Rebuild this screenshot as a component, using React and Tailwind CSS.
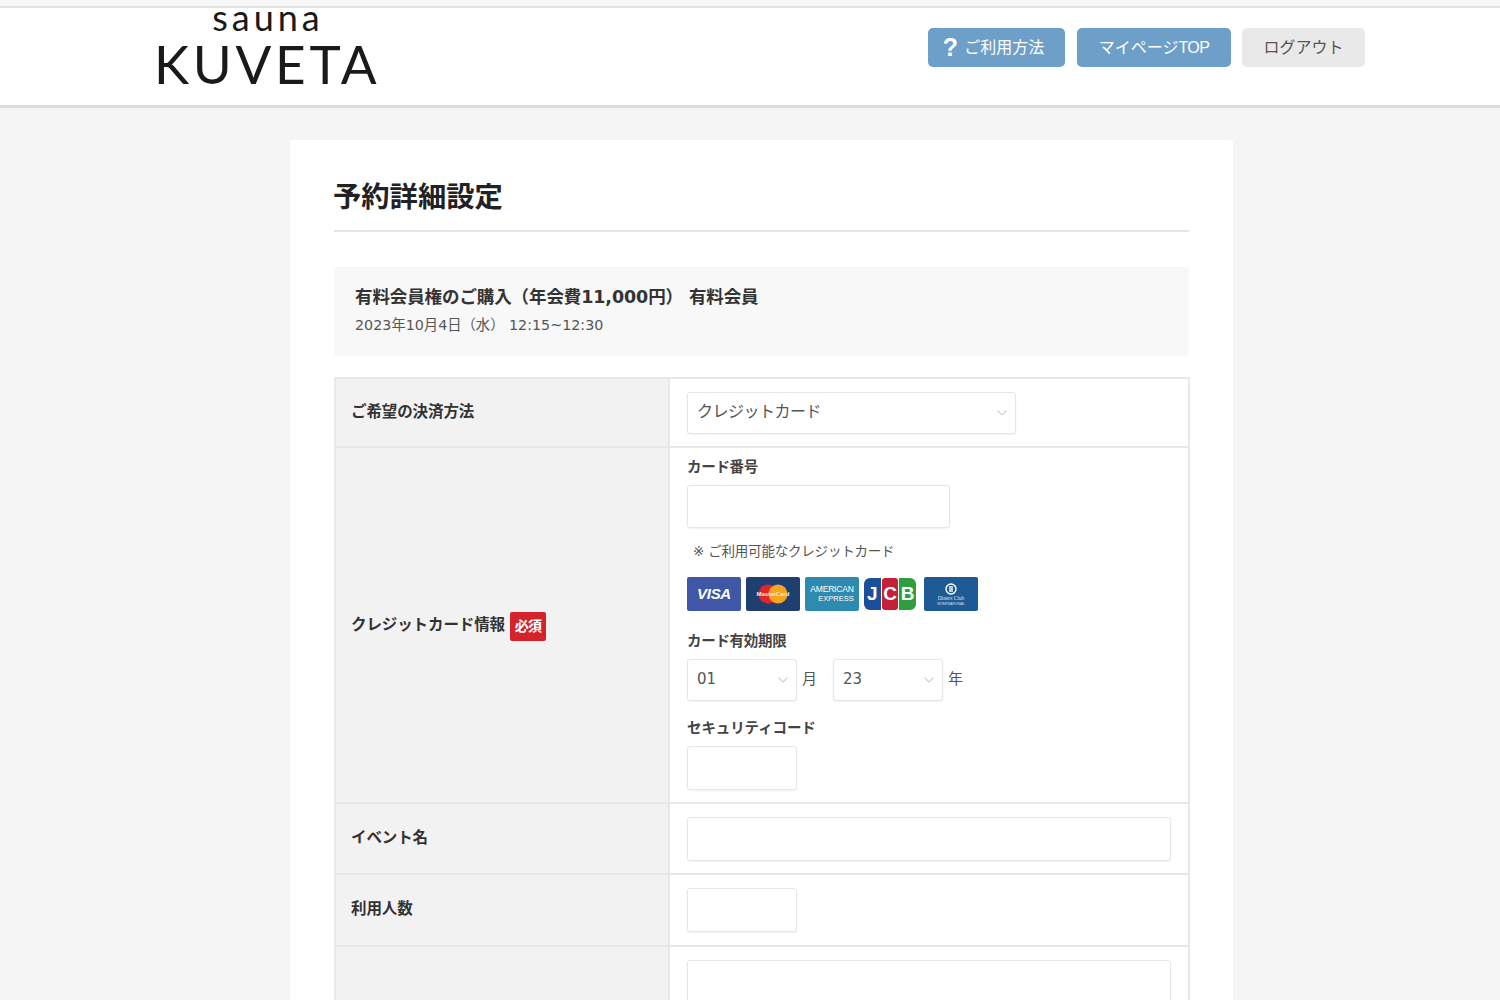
import React from 'react';

const FONT = "font-['DejaVu_Sans','Noto_Sans_CJK_JP',sans-serif]";

const Chevron = () => (
    <svg width="12" height="8" viewBox="0 0 12 8" fill="none" stroke="#d0d3d6" strokeWidth="1.2">
        <path d="M1.5 1.5 6 6l4.5-4.5" />
    </svg>
);

const Field = ({ className = '', children }) => (
    <div className={`bg-white border border-[#e6e6e6] rounded-[3px] shadow-[0_1px_2px_rgba(0,0,0,0.06)] ${className}`}>
        {children}
    </div>
);

const Select = ({ value, className = '', textClass = 'text-[16px] tracking-[-0.5px]' }) => (
    <Field className={`flex items-center justify-between pl-[9px] pr-[7px] ${className}`}>
        <span className={`${textClass} mb-[2px] text-[#555]`}>{value}</span>
        <Chevron />
    </Field>
);

const Row = ({ label, badge, className = '', bodyClass = '', children }) => (
    <div className={`grid grid-cols-[334px_1fr] border-b-2 border-[#e8e8e8] ${className}`}>
        <div className="flex items-center pl-[15px] bg-[#f2f2f2] border-r-2 border-[#e8e8e8] text-[15.5px] font-bold text-[#333]">
            {label && <span className={`tracking-[-0.1px] ${badge ? 'mt-[2px]' : ''}`}>{label}</span>}
            {badge && (
                <span className="ml-[5px] mt-[2px] w-[36px] h-[29px] flex items-center justify-center rounded-[2px] bg-[#d4232b] text-white text-[14px] font-bold tracking-[-0.8px]">
                    {badge}
                </span>
            )}
        </div>
        <div className={`pl-[17px] ${bodyClass}`}>{children}</div>
    </div>
);

const CardLogo = ({ className = '', children }) => (
    <div className={`w-[54px] h-[34px] rounded-[2px] flex flex-col items-center justify-center overflow-hidden ${className}`}>
        {children}
    </div>
);

const CardLogos = () => (
    <div className="mt-[16px] flex items-center">
        <CardLogo className="bg-[#3f57a6]">
            <span className="font-['Liberation_Sans',sans-serif] italic font-bold text-[15px] text-white tracking-[-0.3px]">VISA</span>
        </CardLogo>
        <CardLogo className="ml-[5px] bg-[#1f3f70] relative">
            <svg width="34" height="22" viewBox="0 0 34 22">
                <circle cx="12" cy="11" r="9.5" fill="#e0262d" />
                <circle cx="22" cy="11" r="9.5" fill="#f4a41f" />
            </svg>
            <span className="absolute font-['Liberation_Sans',sans-serif] font-bold text-[6px] leading-[8px] text-[#ffe9d6]">MasterCard</span>
        </CardLogo>
        <CardLogo className="ml-[5px] bg-[#2f8ab0] gap-[1px]">
            <span className="font-['Liberation_Sans',sans-serif] text-[8.5px] leading-[9px] text-white tracking-[-0.2px]">AMERICAN</span>
            <span className="font-['Liberation_Sans',sans-serif] text-[7.5px] leading-[8px] text-white pl-[8px]">EXPRESS</span>
        </CardLogo>
        <div className="ml-[5px] w-[52px] h-[32px] flex gap-[1px] font-['Liberation_Sans',sans-serif] font-bold text-[19px] text-white text-center leading-[32px]">
            <span className="flex-1 bg-[#1a4f9c] rounded-l-[6px]">J</span>
            <span className="flex-1 bg-[#c3213a] rounded-[3px]">C</span>
            <span className="flex-1 bg-[#2f9e3f] rounded-r-[6px]">B</span>
        </div>
        <CardLogo className="ml-[8px] bg-[#1d5a96]">
            <svg width="14" height="12" viewBox="0 0 14 12" fill="none" stroke="#fff" strokeWidth="1.4">
                <circle cx="7" cy="6" r="5" />
                <path d="M6 3v6M8 3v6" />
            </svg>
            <span className="font-['Liberation_Serif',serif] text-[5.5px] leading-[7px] text-[#d7e6f3]">Diners Club</span>
            <span className="font-['Liberation_Sans',sans-serif] text-[3.5px] leading-[4px] text-[#d7e6f3]">INTERNATIONAL</span>
        </CardLogo>
    </div>
);

const Header = () => (
    <header className="bg-white border-b-[3px] border-[#dcdcdc]">
        <div className="h-[8px] bg-[#f7f7f7] border-b-2 border-[#e2e2e2]" />
        <div className="h-[97px] flex items-start">
            <div className="ml-[154px] w-[224px] font-['Lato',sans-serif] text-[#1a1a1a] text-center">
                <div className="pl-[4px] text-[36px] leading-[22px] tracking-[4px] -mt-[2px]">sauna</div>
                <div className="mt-[9px] text-[53px] leading-[54px] tracking-[3.7px] whitespace-nowrap">KUVETA</div>
            </div>
            <nav className="ml-[550px] mt-[20px] flex text-[16px]">
                <a className="w-[137px] h-[39px] pr-[6px] flex items-center justify-center rounded-[5px] bg-[#6d9fc9] text-white">
                    <span className="text-[25px] font-bold font-['Liberation_Sans',sans-serif] mr-[6px]">?</span>ご利用方法
                </a>
                <a className="ml-[12px] w-[154px] h-[39px] flex items-center justify-center rounded-[5px] bg-[#6d9fc9] text-white">
                    マイページ<span className="font-['Liberation_Sans',sans-serif] tracking-[-0.6px]">TOP</span>
                </a>
                <a className="ml-[11px] w-[123px] h-[39px] flex items-center justify-center rounded-[5px] bg-[#e9e9e9] text-[#555]">
                    ログアウト
                </a>
            </nav>
        </div>
    </header>
);

const App = () => (
    <div className={`h-[1000px] overflow-hidden bg-[#f5f5f5] ${FONT}`}>
        <Header />
        <main className="ml-[290px] mt-[32px] w-[943px] bg-white rounded-t-[3px] px-[44px] pt-[40px] h-[900px]">
            <h1 className="pb-[15px] border-b-2 border-[#e6e6e6] text-[28.3px] leading-[35px] font-bold text-[#222] -indent-[1px]">
                予約詳細設定
            </h1>
            <section className="mt-[35px] h-[89px] bg-[#f8f8f8] rounded-[3px] pl-[21px] pt-[19px]">
                <p className="text-[17.5px] leading-[22px] font-bold text-[#333] tracking-[-0.1px]">
                    有料会員権のご購入（年会費11,000円） 有料会員
                </p>
                <p className="mt-[8px] text-[14.3px] leading-[18px] text-[#555]">
                    2023年10月4日（水） 12:15~12:30
                </p>
            </section>
            <section className="mt-[21px] w-[856px] border-2 border-b-0 border-[#e8e8e8]">
                <Row label="ご希望の決済方法" className="h-[69px]" bodyClass="flex items-center">
                    <Select value="クレジットカード" className="w-[329px] h-[42px]" />
                </Row>
                <Row label="クレジットカード情報" badge="必須" className="h-[356px]" bodyClass="pt-[9px]">
                    <div className="text-[14.5px] leading-[20px] font-bold text-[#444] tracking-[-0.3px]">カード番号</div>
                    <Field className="mt-[8px] w-[263px] h-[43px]" />
                    <div className="mt-[13px] ml-[6px] text-[13.5px] leading-[20px] text-[#555] tracking-[-0.2px]">※ ご利用可能なクレジットカード</div>
                    <CardLogos />
                    <div className="mt-[20px] text-[14.5px] leading-[20px] font-bold text-[#444] tracking-[-0.3px]">カード有効期限</div>
                    <div className="mt-[8px] flex items-center text-[15px] text-[#555]">
                        <Select value="01" className="w-[110px] h-[42px]" textClass="text-[15px]" />
                        <span className="ml-[5px] w-[31px] mb-[2px]">月</span>
                        <Select value="23" className="w-[110px] h-[42px]" textClass="text-[15px]" />
                        <span className="ml-[5px] mb-[2px]">年</span>
                    </div>
                    <div className="mt-[17px] text-[14.5px] leading-[20px] font-bold text-[#444] tracking-[-0.1px]">セキュリティコード</div>
                    <Field className="mt-[8px] w-[110px] h-[44px]" />
                </Row>
                <Row label="イベント名" className="h-[71px]" bodyClass="flex items-center">
                    <Field className="w-[484px] h-[44px]" />
                </Row>
                <Row label="利用人数" className="h-[72px]" bodyClass="flex items-center">
                    <Field className="w-[110px] h-[44px]" />
                </Row>
                <Row className="h-[120px]" bodyClass="pt-[13px]">
                    <Field className="w-[484px] h-[90px]" />
                </Row>
            </section>
        </main>
    </div>
);

export default App;
